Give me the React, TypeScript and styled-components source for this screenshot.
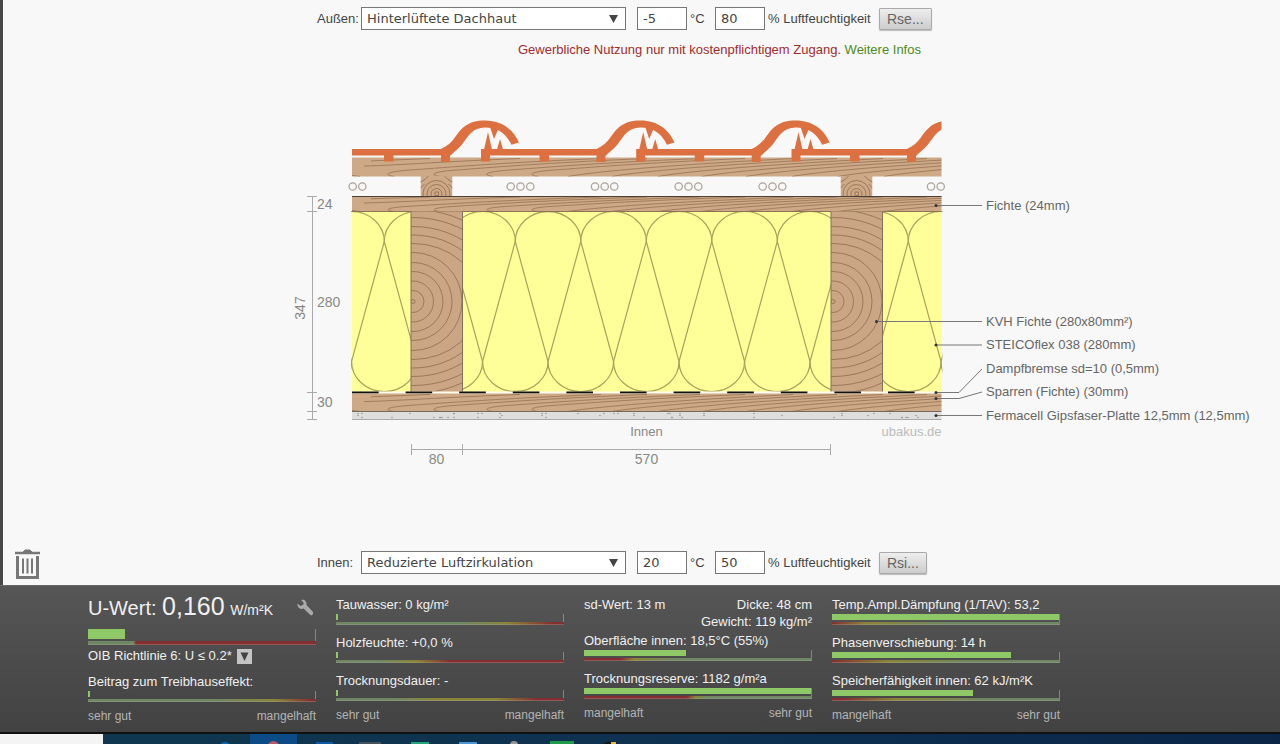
import React from "react";
import styled, { createGlobalStyle } from "styled-components";

const GlobalStyle = createGlobalStyle`
  * { box-sizing: border-box; }
  body {
    margin: 0;
    background: #f8f8f8;
    color: #444;
    font: 13px/18px "Liberation Sans", Arial, sans-serif;
  }
`;

const Page = styled.div`
  display: flex;
  flex-direction: column;
  min-height: 100vh;
`;

const Workspace = styled.main`
  flex: 1;
  display: flex;
  flex-direction: column;
  border-left: 3px solid #484848;
  padding-top: 7px;
`;

const ClimateRow = styled.div`
  display: flex;
  align-items: center;
  height: 23px;
  padding-left: 314px;
`;

const FieldLabel = styled.label`
  width: 44px;
`;

const SelectBox = styled.div`
  display: grid;
  width: 265px;
  margin-right: 11px;
  align-items: center;
  & > * { grid-area: 1 / 1; }
  & > svg { justify-self: end; margin-right: 8px; pointer-events: none; }
`;

const Select = styled.select`
  appearance: none;
  height: 23px;
  padding: 0 24px 0 5px;
  border: 1px solid #777;
  border-radius: 0;
  background: #fff;
  color: #444;
  font: 13px "DejaVu Sans", Verdana, sans-serif;
`;

const NumberBox = styled.input`
  width: 50px;
  height: 23px;
  padding: 0 5px;
  border: 1px solid #777;
  background: #fff;
  color: #444;
  font: 13px "DejaVu Sans", Verdana, sans-serif;
`;

const Unit = styled.span<{ $width: number }>`
  width: ${(p) => p.$width}px;
  padding-left: 3px;
  white-space: nowrap;
`;

const RsButton = styled.button`
  height: 22px;
  padding: 0 7px;
  border: 1px solid #aaa;
  border-radius: 1px;
  background: linear-gradient(#eee, #ccc);
  box-shadow: 0 1px 1px #bbb;
  color: #666;
  font: 14px "Liberation Sans", Arial, sans-serif;
`;

const Notice = styled.p`
  margin: 11px 0 0;
  padding-left: 515px;
  color: #a02c2c;
  & a { color: #4b8b24; text-decoration: none; }
`;

const Drawing = styled.svg`
  display: block;
  flex: none;
  width: 990px;
  height: 360px;
  margin: 51px 0 0 287px;
  font: 14px "Liberation Sans", Arial, sans-serif;
`;

const SmallText = styled.text`
  font-size: 13px;
`;

const LowerArea = styled.div`
  display: flex;
  align-items: flex-start;
  margin-top: auto;
  margin-bottom: 5px;
  & > ${ClimateRow} { padding-left: 273px; margin-top: 2px; }
`;

const TrashButton = styled.button`
  width: 27px;
  height: 31px;
  margin-left: 11px;
  margin-right: 3px;
  padding: 0;
  border: 0;
  background: none;
  & > svg { display: block; }
`;

const Results = styled.section`
  display: flex;
  gap: 20px;
  height: 149px;
  padding: 10px 20px 0 88px;
  border-top: 1px solid #6a6a6a;
  border-bottom: 2px solid #111;
  background: linear-gradient(#565656, #424242);
  color: #f0f0f0;
`;

const Column = styled.div`
  display: flex;
  flex-direction: column;
  width: 228px;
`;

const Facts = styled.div`
  display: flex;
  flex-wrap: wrap;
  justify-content: space-between;
  line-height: 17px;
  margin-bottom: 2px;
  & > :last-child { margin-left: auto; }
`;

const MetricBox = styled.div`
  display: flex;
  flex-direction: column;
  margin-bottom: 9px;
`;

const MetricText = styled.span`
  white-space: nowrap;
`;

const Headline = styled.div`
  display: flex;
  align-items: center;
  justify-content: space-between;
  height: 24px;
  margin-bottom: 9px;
  padding-right: 2px;
  font-size: 20px;
  & b { font-size: 25px; font-weight: 400; }
  & small { font-size: 14px; }
`;

const Track = styled.div<{ $tall?: boolean }>`
  height: ${(p) => (p.$tall ? 12 : 8)}px;
  border-right: 1px solid #858585;
`;

const Fill = styled.div<{ $tall?: boolean }>`
  height: ${(p) => (p.$tall ? 10 : 6)}px;
  background: #8fc866;
`;

const Scale = styled.div<{ $colors: string; $tall?: boolean }>`
  height: ${(p) => (p.$tall ? 4 : 3)}px;
  border-bottom: 1px solid rgba(170, 170, 170, 0.35);
  background: linear-gradient(90deg, ${(p) => p.$colors});
`;

const Requirement = styled.div`
  display: flex;
  align-items: center;
  gap: 5px;
  height: 18px;
  margin: 2px 0 8px;
`;

const DropButton = styled.button`
  display: flex;
  align-items: center;
  justify-content: center;
  width: 15px;
  height: 15px;
  padding: 0;
  border: 0;
  background: #c4c4c4;
`;

const Legend = styled.div`
  display: flex;
  justify-content: space-between;
  margin-top: -4px;
  color: #b4b4b4;
  font-size: 12px;
`;

const Taskbar = styled.footer`
  display: flex;
  height: 10px;
  background: linear-gradient(90deg, #10384f, #0d3050 60%, #0b2547);
`;

const TaskSearch = styled.div`
  width: 103px;
  background: #f4f4f4;
`;

const TaskIcons = styled.svg`
  display: block;
  width: 560px;
  height: 10px;
`;

const GREEN = "#6f8762";
const YELLOW = "#8a8438";
const RED = "#842f2f";

function Metric({ text, value, colors }: { text: string; value: number; colors: string }) {
  return (
    <MetricBox>
      <MetricText>{text}</MetricText>
      <Track>
        <Fill style={{ width: `${value}%` }} />
      </Track>
      <Scale $colors={colors} />
    </MetricBox>
  );
}

interface ClimateProps {
  id: string;
  label: string;
  option: string;
  temperature: string;
  humidity: string;
  action: string;
}

function Climate({ id, label, option, temperature, humidity, action }: ClimateProps) {
  return (
    <ClimateRow>
      <FieldLabel htmlFor={id}>{label}</FieldLabel>
      <SelectBox>
        <Select id={id} defaultValue={option}>
          <option>{option}</option>
        </Select>
        <svg width="9" height="8" viewBox="0 0 9 8">
          <path d="M0 0H9L4.5 8Z" fill="#444" />
        </svg>
      </SelectBox>
      <NumberBox defaultValue={temperature} aria-label={`${label} Temperatur`} />
      <Unit $width={28}>°C</Unit>
      <NumberBox defaultValue={humidity} aria-label={`${label} Luftfeuchtigkeit`} />
      <Unit $width={114}>% Luftfeuchtigkeit</Unit>
      <RsButton type="button">{action}</RsButton>
    </ClimateRow>
  );
}

const LEFT = 352;
const RIGHT = 941.5;
const GRAIN = "#967256";

function Grain({ top, height }: { top: number; height: number }) {
  const h = height;
  const hooked = [386, 432, 485, 530];
  const plain = [578, 622, 668, 712, 756, 802, 848, 894];
  return (
    <g fill="none" stroke={GRAIN} strokeWidth="0.8">
      <path d={`M364 ${top + h * 0.45}C400 ${top + h * 0.4} 440 ${top + h * 0.22} 520 ${top + 1}`} />
      <path d={`M371 ${top + h * 0.18}L430 ${top + 1}`} />
      <path d={`M352 ${top + h - 1}L360 ${top + h}`} />
      {hooked.map((x) => (
        <path
          key={x}
          d={`M${x + 8} ${top + h}C${x - 4} ${top + h * 0.9} ${x + 2} ${top + h * 0.74} ${x + 24} ${top + h * 0.66}S${x + 110} ${top + h * 0.28} ${x + 215} ${top + 1}`}
        />
      ))}
      {plain.map((x) => (
        <path
          key={x}
          d={`M${x - 10} ${top + h}C${x + 20} ${top + h * 0.72} ${x + 90} ${top + h * 0.4} ${x + 215} ${top + 1}`}
        />
      ))}
    </g>
  );
}

function Layer({ top, height }: { top: number; height: number }) {
  return (
    <g>
      <rect x={LEFT} y={top} width={RIGHT - LEFT} height={height} fill="#cda987" />
      <svg x={LEFT} y={top} width={RIGHT - LEFT} height={height} viewBox={`${LEFT} ${top} ${RIGHT - LEFT} ${height}`}>
        <Grain top={top} height={height} />
      </svg>
    </g>
  );
}

function Post({ x }: { x: number }) {
  const radii = [2, 11, 20.5, 30, 39, 49, 58, 66.5, 75, 84, 92, 100, 107];
  return (
    <g>
      <svg x={x} y="211.5" width="52" height="180.5" viewBox={`${x} 211.5 52 180.5`}>
        <rect x={x} y="211" width="52" height="182" fill="#cba684" />
        <g fill="none" stroke={GRAIN} strokeWidth="0.9">
          {radii.map((r) => (
            <ellipse key={r} cx={x + 2} cy="301.5" rx={r > 50 ? r * 1.15 : r} ry={r} />
          ))}
        </g>
      </svg>
      <path d={`M${x} 211.5V392M${x + 51.5} 211.5V392`} stroke="#85705a" />
    </g>
  );
}

function Batten({ x }: { x: number }) {
  return (
    <svg x={x} y="176" width="32" height="20" viewBox="0 0 32 20">
      <rect width="32" height="20" fill="#cda987" />
      <g fill="none" stroke={GRAIN} strokeWidth="0.9">
        <rect x="14.5" y="16" width="3.5" height="3.5" />
        <circle cx="16" cy="18" r="5.5" />
        <circle cx="16" cy="18" r="9.5" />
        <circle cx="16" cy="18" r="13.5" />
        <path d="M0 6Q5 4 8 0M32 6Q27 4 24 0M0 12L4 8M32 12L28 8" />
      </g>
    </svg>
  );
}

function RoofTile({ x }: { x: number }) {
  return (
    <g transform={`translate(${x} 0)`}>
      <path d="M0 149H120V155.5H68V161.5H58.5V155.5H9V161.5H0Z" />
      <path d="M115.5 149C122 146 126 142 129 138C136 128 142 120.5 159.5 120.5C177 120.5 188 130 193.500 142.500L186 144.700C180 133 172 127.500 159.500 127.500C147 127.500 143 136 139 141C135 147 132 149 124.500 156V162H115.500Z" />
      <path d="M3 149.500L7 132L11 149.500ZM9 127L13 139L18 127.500ZM16 149.500L19 139L22 149.500Z" />
    </g>
  );
}

const AIR = [352.7, 362.3, 510.7, 520.5, 530.3, 595, 604.7, 614.3, 678.7, 688.5, 698.3, 762.7, 772.5, 782.3, 931, 940.7];

const CALLOUTS = [
  { text: "Fichte (24mm)", y: 210, line: "M936 205.500H982" },
  { text: "KVH Fichte (280x80mm²)", y: 326, line: "M876 321.500H982" },
  { text: "STEICOflex 038 (280mm)", y: 349, line: "M936 345H982" },
  { text: "Dampfbremse sd=10 (0,5mm)", y: 373, line: "M936 392.500H959L982 369" },
  { text: "Sparren (Fichte) (30mm)", y: 396, line: "M936 398.500H959L982 392" },
  { text: "Fermacell Gipsfaser-Platte 12,5mm (12,5mm)", y: 420, line: "M936 415.500H982" },
];

function Insulation() {
  const step = 65.5;
  const crossings = Array.from({ length: 11 }, (_, i) => 318.8 + i * step);
  return (
    <svg x={LEFT - 1} y="211" width={RIGHT - LEFT + 2} height="182" viewBox={`${LEFT - 1} 211 ${RIGHT - LEFT + 2} 182`}>
      <rect x={LEFT} y="211" width={RIGHT - LEFT} height="182" fill="#ffff99" />
      <g fill="none" stroke="#a8a25c" strokeWidth="1.2">
        {crossings.map((x) => (
          <path
            key={x}
            d={`M${x - step / 2} 361.500L${x} 241.500A32.750 30 0 0 1 ${x + step} 241.500M${x} 241.500L${x + step / 2} 361.500A32.750 30 0 0 1 ${x - step / 2} 361.500`}
          />
        ))}
      </g>
    </svg>
  );
}

function RoofSection() {
  const specks = Array.from({ length: 56 }, (_, i) => ({
    x: 358 + ((i * i * 37 + i * 83) % 578),
    y: 413.5 + ((i * i * 3 + i) % 5),
  }));
  return (
    <Drawing viewBox="290 110 990 360" role="img" aria-label="Dachaufbau">
      <Layer top={157.5} height={19} />
      <svg x={LEFT} y="110" width={RIGHT - LEFT} height="60" viewBox={`${LEFT} 110 ${RIGHT - LEFT} 60`}>
        <g fill="#dc7040">
          {[325.5, 481, 636.2, 791.5].map((x) => (
            <RoofTile key={x} x={x} />
          ))}
        </g>
      </svg>
      <Batten x={420.5} />
      <Batten x={840.5} />
      <g fill="none" stroke="#aaa096" strokeWidth="1.2">
        {AIR.map((x) => (
          <circle key={x} cx={x} cy="186.500" r="3.700" />
        ))}
      </g>
      <Insulation />
      <Layer top={196} height={15.5} />
      <path d={`M${LEFT} 196.500H${RIGHT}`} stroke="#4d4036" />
      <path d={`M${LEFT} 211.500H${RIGHT}`} stroke="#8d7556" />
      <Post x={411} />
      <Post x={831} />
      <path d={`M${LEFT} 392.500H${RIGHT}`} stroke="#fffbe8" strokeWidth="2" />
      <path d={`M${LEFT} 392.500H${RIGHT}`} stroke="#111" strokeWidth="2" strokeDasharray="26.600 27" />
      <Layer top={393.5} height={18} />
      <rect x={LEFT} y="412" width={RIGHT - LEFT} height="8" fill="#dededc" />
      <g fill="#999">
        {specks.map((s, i) => (
          <circle key={i} cx={s.x} cy={s.y} r="0.800" />
        ))}
      </g>
      <path d={`M${LEFT} 411.500H${RIGHT}`} stroke="#77695c" />
      <path d={`M${LEFT} 419.500H${RIGHT}`} stroke="#aaa" />

      <g stroke="#aaa" fill="none">
        <path d="M312.500 196V420M307 196.500H317M307 211.500H317M307 392.500H317M307 411.500H317M307 419.500H317" />
        <path d="M411 449.500H831M411.500 444V455M462.500 444V455M830.500 444V455" />
      </g>
      <g fill="#888">
        <text x="317" y="209">24</text>
        <text x="317" y="307">280</text>
        <text x="317" y="407">30</text>
        <text x="305" y="308" textAnchor="middle" transform="rotate(-90 305 308)">347</text>
        <text x="436.500" y="464" textAnchor="middle">80</text>
        <text x="646.500" y="464" textAnchor="middle">570</text>
        <SmallText x="646.500" y="436" textAnchor="middle">Innen</SmallText>
        <SmallText x="941.500" y="436" textAnchor="end" fill="#bbb">ubakus.de</SmallText>
      </g>
      <g fill="none" stroke="#777">
        {CALLOUTS.map((c) => (
          <path key={c.text} d={c.line} />
        ))}
      </g>
      <g fill="#333">
        <circle cx="936" cy="205.500" r="1.500" />
        <circle cx="876.500" cy="321.500" r="1.500" />
        <circle cx="936" cy="345" r="1.500" />
        <circle cx="936" cy="392.500" r="1.500" />
        <circle cx="936" cy="398.500" r="1.500" />
        <circle cx="936" cy="415.500" r="1.500" />
      </g>
      <g fill="#666">
        {CALLOUTS.map((c) => (
          <SmallText key={c.text} x="986" y={c.y}>{c.text}</SmallText>
        ))}
      </g>
    </Drawing>
  );
}

export default function App() {
  return (
    <Page>
      <GlobalStyle />
      <Workspace>
        <Climate id="outside" label="Außen:" option="Hinterlüftete Dachhaut" temperature="-5" humidity="80" action="Rse..." />
        <Notice>
          Gewerbliche Nutzung nur mit kostenpflichtigem Zugang. <a href="#infos">Weitere Infos</a>
        </Notice>
        <RoofSection />
        <LowerArea>
          <TrashButton type="button" aria-label="Löschen">
            <svg width="27" height="31" viewBox="0 0 27 31" fill="none" stroke="#777">
              <path d="M1 4H26" strokeWidth="2.500" />
              <path d="M9 3L11 1H16L18 3Z" fill="#777" />
              <path d="M3.500 7V28.500H23.500V7" strokeWidth="3" />
              <path d="M9 9.500V24.500M13.500 9.500V24.500M18 9.500V24.500" strokeWidth="2" />
            </svg>
          </TrashButton>
          <Climate id="inside" label="Innen:" option="Reduzierte Luftzirkulation" temperature="20" humidity="50" action="Rsi..." />
        </LowerArea>
      </Workspace>

      <Results>
        <Column>
          <Headline>
            <span>
              U-Wert: <b>0,160</b> <small>W/m²K</small>
            </span>
            <svg width="18" height="18" viewBox="0 0 18 18">
              <path
                d="M5 1C8 0 11 2 10.500 6L17 13Q17.500 16 15 16.500L7.500 9.500C4 11 1 8 1.500 4.500L4.500 7L7.500 5.500L7.500 3.500Z"
                fill="#aaa"
              />
            </svg>
          </Headline>
          <Track $tall>
            <Fill $tall style={{ width: "16.5%" }} />
          </Track>
          <Scale $tall $colors={`${GREEN} 20%, ${RED} 21%`} />
          <Requirement>
            <span>OIB Richtlinie 6: U ≤ 0.2*</span>
            <DropButton type="button" aria-label="Richtlinie wählen">
              <svg width="9" height="9" viewBox="0 0 9 9">
                <path d="M0.500 0.500H8.500L4.500 9Z" fill="#444" />
              </svg>
            </DropButton>
          </Requirement>
          <Metric text="Beitrag zum Treibhauseffekt:" value={1} colors={`${GREEN} 55%, ${YELLOW} 82%, ${RED} 98%`} />
          <Legend>
            <span>sehr gut</span>
            <span>mangelhaft</span>
          </Legend>
        </Column>
        <Column>
          <Metric text="Tauwasser: 0 kg/m²" value={1} colors={`${GREEN} 55%, ${YELLOW} 75%, ${RED} 95%`} />
          <Metric text="Holzfeuchte: +0,0 %" value={1} colors={`${GREEN} 20%, ${YELLOW} 35%, ${RED} 50%`} />
          <Metric text="Trocknungsdauer: -" value={1} colors={`${GREEN} 25%, ${YELLOW} 45%, ${YELLOW} 70%, ${RED} 88%`} />
          <Legend>
            <span>sehr gut</span>
            <span>mangelhaft</span>
          </Legend>
        </Column>
        <Column>
          <Facts>
            <span>sd-Wert: 13 m</span>
            <span>Dicke: 48 cm</span>
            <span>Gewicht: 119 kg/m²</span>
          </Facts>
          <Metric text="Oberfläche innen: 18,5°C (55%)" value={45} colors={`${RED} 16%, ${YELLOW} 22%, ${GREEN} 40%`} />
          <Metric text="Trocknungsreserve: 1182 g/m²a" value={100} colors={`${RED} 45%, ${YELLOW} 49%, ${GREEN} 54%`} />
          <Legend>
            <span>mangelhaft</span>
            <span>sehr gut</span>
          </Legend>
        </Column>
        <Column>
          <Metric text="Temp.Ampl.Dämpfung (1/TAV): 53,2" value={100} colors={`${RED}, ${YELLOW} 15%, ${GREEN} 50%`} />
          <Metric text="Phasenverschiebung: 14 h" value={79} colors={`${RED}, ${YELLOW} 25%, ${GREEN} 60%`} />
          <Metric text="Speicherfähigkeit innen: 62 kJ/m²K" value={62} colors={`${RED} 5%, ${YELLOW} 28%, ${GREEN} 70%`} />
          <Legend>
            <span>mangelhaft</span>
            <span>sehr gut</span>
          </Legend>
        </Column>
      </Results>
      <Taskbar>
        <TaskSearch />
        <TaskIcons viewBox="103 734 560 10">
          <rect x="250" y="734" width="47" height="10" fill="#0c4c86" />
          <circle cx="225" cy="748" r="6" fill="#0c67ae" />
          <circle cx="273.500" cy="747" r="6" fill="#b95a68" />
          <rect x="316" y="742" width="17" height="2" fill="#0e5ba5" />
          <rect x="359" y="742" width="22" height="2" fill="#47525f" />
          <rect x="411" y="742" width="18" height="2" fill="#25a57d" />
          <rect x="459" y="742" width="18" height="2" fill="#4b96d4" />
          <circle cx="514" cy="745" r="4" fill="#9a9694" />
          <rect x="550" y="741" width="24" height="3" fill="#209b49" />
          <path d="M603 744Q608 739 618 744Z" fill="#171717" />
          <path d="M611 742L616 742V744H611Z" fill="#e9b93b" />
        </TaskIcons>
      </Taskbar>
    </Page>
  );
}
